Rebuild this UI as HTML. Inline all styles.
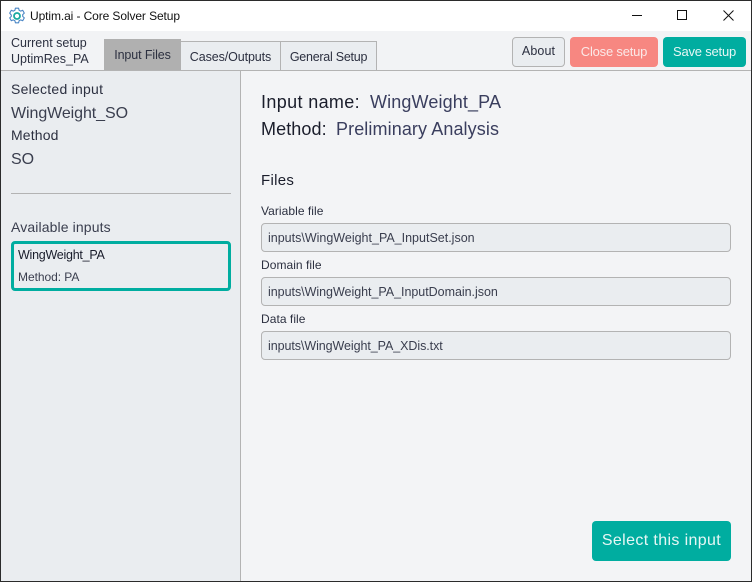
<!DOCTYPE html>
<html><head><meta charset="utf-8">
<style>
html,body{margin:0;padding:0;width:752px;height:582px;overflow:hidden;background:#2b2b2b}
*{box-sizing:border-box}
#w{position:absolute;left:1px;top:1px;width:750px;height:580px;background:#f3f4f6;overflow:hidden;font-family:"Liberation Sans",sans-serif;color:#2c3040}
.a{position:absolute;white-space:nowrap;line-height:1}
.box{position:absolute;background:#eaedf0;border:1px solid #b3b3b3;border-radius:4px}
.btn{position:absolute;border-radius:4px;text-align:center;font-size:13px}
</style></head><body>
<div id="w">
<div class="a" style="left:0;top:0;width:750px;height:30px;background:#fff"></div>
<svg class="a" style="left:7px;top:6px" width="18" height="18" viewBox="0 0 18 18" fill="none"><path d="M7.4 1.2h3.2l.5 2.1 1.6.8 2-.8 1.600 2.800-1.600 1.500v1.800l1.600 1.500-1.600 2.800-2-.8-1.600.8-.5 2.100H7.400l-.5-2.100-1.600-.8-2 .8-1.600-2.800 1.600-1.500V8.100L1.700 6.100l1.600-2.800 2 .8 1.600-.8z" stroke="#4a86c5" stroke-width="1.100" stroke-linejoin="round"/><circle cx="9" cy="9" r="3" stroke="#19a9a0" stroke-width="1.800"/></svg>
<div class="a" style="left:29px;top:9px;font-size:12px;color:#111;letter-spacing:-.1px">Uptim.ai - Core Solver Setup</div>
<div class="a" style="left:631px;top:14px;width:10px;height:1px;background:#111"></div>
<div class="a" style="left:676px;top:9px;width:10px;height:10px;border:1px solid #111"></div>
<svg class="a" style="left:722px;top:9px" width="11" height="11" viewBox="0 0 11 11"><path d="M.5.500l10 10M10.500.500l-10 10" stroke="#111" stroke-width="1" fill="none"/></svg>

<div class="a" style="left:0;top:30px;width:750px;height:40px;background:#f2f3f5"></div>
<div class="a" style="left:0;top:69px;width:750px;height:1px;background:#b3b3b3"></div>
<div class="a" style="left:10px;top:36px;font-size:12.500px;letter-spacing:0">Current setup</div>
<div class="a" style="left:10px;top:52px;font-size:12.500px;letter-spacing:.02px">UptimRes_PA</div>

<div class="a" style="left:103px;top:38px;width:77px;height:31px;background:#b0b0b0;font-size:12.500px;letter-spacing:-.1px;padding-top:10px;text-align:center">Input Files</div>
<div class="a" style="left:180px;top:40px;width:100px;height:30px;background:#eaedf0;border:1px solid #b3b3b3;border-left:0;font-size:12.500px;letter-spacing:-.1px;padding-top:9px;text-align:center">Cases/Outputs</div>
<div class="a" style="left:280px;top:40px;width:96px;height:30px;background:#eaedf0;border:1px solid #b3b3b3;border-left:0;font-size:12.500px;letter-spacing:-.25px;padding-top:9px;text-align:center">General Setup</div>

<div class="btn" style="left:511px;top:36px;width:53px;height:30px;background:#eaedf0;border:1px solid #b3b3b3;line-height:27px;font-size:12.500px;letter-spacing:.1px">About</div>
<div class="btn" style="left:569px;top:36px;width:88px;height:30px;background:#f78781;color:#fbe9e8;line-height:29px;letter-spacing:-.2px">Close setup</div>
<div class="btn" style="left:662px;top:36px;width:83px;height:30px;background:#00ada0;color:#e6f7f5;line-height:29px;letter-spacing:-.2px">Save setup</div>

<div class="a" style="left:0;top:70px;width:240px;height:510px;background:#eaedf0;border-right:1px solid #b3b3b3"></div>
<div class="a" style="left:10px;top:81px;font-size:14px;letter-spacing:.25px">Selected input</div>
<div class="a" style="left:10px;top:105px;font-size:16px;letter-spacing:-.08px;color:#3a3e4e">WingWeight_SO</div>
<div class="a" style="left:10px;top:127px;font-size:14px;letter-spacing:.15px">Method</div>
<div class="a" style="left:10px;top:151px;font-size:16px;letter-spacing:-.08px;color:#3a3e4e">SO</div>
<div class="a" style="left:10px;top:192px;width:220px;height:1px;background:#b3b3b3"></div>
<div class="a" style="left:10px;top:219px;font-size:14px;letter-spacing:.12px;color:#3a3e4e">Available inputs</div>
<div class="a" style="left:10px;top:240px;width:220px;height:50px;border:3px solid #00ada0;border-radius:4px"></div>
<div class="a" style="left:17px;top:248px;font-size:12.500px;color:#1a1d2b;letter-spacing:-.25px">WingWeight_PA</div>
<div class="a" style="left:17px;top:270px;font-size:12px;letter-spacing:-.05px;color:#3a3e4e">Method: PA</div>

<div class="a" style="left:260px;top:92px;font-size:18px;color:#1a1d2b;letter-spacing:.36px">Input name:</div>
<div class="a" style="left:369px;top:92px;font-size:18px;letter-spacing:.13px;color:#3a3e5e">WingWeight_PA</div>
<div class="a" style="left:260px;top:119px;font-size:18px;color:#1a1d2b;letter-spacing:.1px">Method:</div>
<div class="a" style="left:335px;top:119px;font-size:18px;letter-spacing:.1px;color:#3a3e5e">Preliminary Analysis</div>
<div class="a" style="left:260px;top:172px;font-size:15px;color:#1a1d2b;letter-spacing:.3px">Files</div>

<div class="a" style="left:260px;top:204px;font-size:12px;letter-spacing:.05px">Variable file</div>
<div class="box" style="left:260px;top:222px;width:470px;height:29px"></div>
<div class="a" style="left:267px;top:231px;font-size:12.500px;letter-spacing:0;color:#3a3e4e">inputs\WingWeight_PA_InputSet.json</div>
<div class="a" style="left:260px;top:258px;font-size:12px;letter-spacing:.05px">Domain file</div>
<div class="box" style="left:260px;top:276px;width:470px;height:29px"></div>
<div class="a" style="left:267px;top:285px;font-size:12.500px;letter-spacing:-.03px;color:#3a3e4e">inputs\WingWeight_PA_InputDomain.json</div>
<div class="a" style="left:260px;top:312px;font-size:12px;letter-spacing:.05px">Data file</div>
<div class="box" style="left:260px;top:330px;width:470px;height:29px"></div>
<div class="a" style="left:267px;top:339px;font-size:12.500px;letter-spacing:-.07px;color:#3a3e4e">inputs\WingWeight_PA_XDis.txt</div>

<div class="btn" style="left:591px;top:520px;width:139px;height:40px;background:#00ada0;color:#e6f7f5;font-size:16px;line-height:40px;letter-spacing:.37px">Select this input</div>
</div>
</body></html>
